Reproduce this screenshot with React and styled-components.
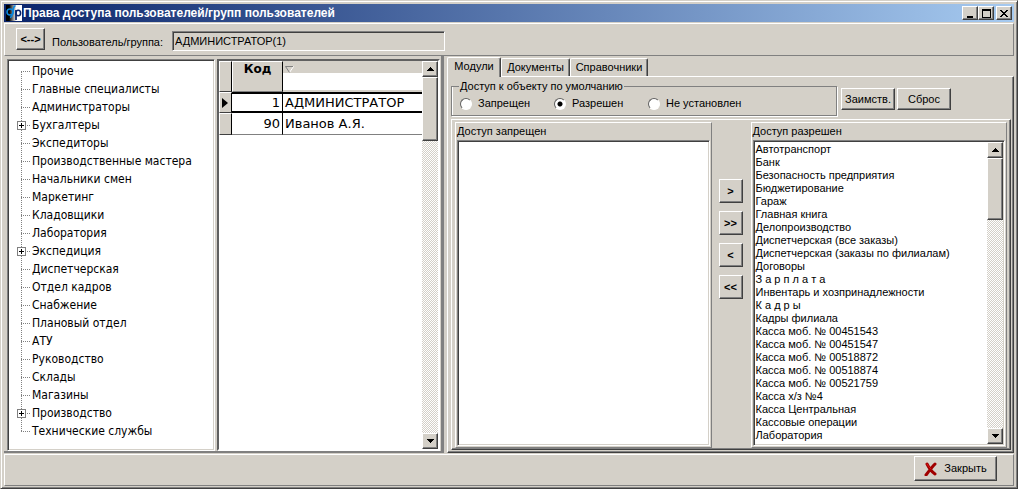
import { useState } from 'react';
import styled, { createGlobalStyle, css } from 'styled-components';

const GlobalStyle = createGlobalStyle`
  * { box-sizing: border-box; }
  body {
    margin: 0;
    background: #d4d0c8;
    color: #000;
    font-family: "Liberation Sans", Arial, sans-serif;
    font-size: 11px;
    line-height: 13px;
  }
  button, input {
    font: inherit;
    color: inherit;
    margin: 0;
  }
  ul {
    list-style: none;
    margin: 0;
    padding: 0;
  }
`

const raised = css`
  border: 1px solid;
  border-color: #fff #808080 #808080 #fff;
`
const raisedDeep = css`
  border: 1px solid;
  border-color: #fff #404040 #404040 #fff;
  box-shadow: inset -1px -1px 0 #808080;
`
const sunken = css`
  border: 1px solid;
  border-color: #808080 #fff #fff #808080;
  box-shadow: inset 1px 1px 0 #404040, inset -1px -1px 0 #d4d0c8;
`

const Window = styled.div`
  display: flex;
  flex-direction: column;
  min-height: 100vh;
  padding: 3px 3px 2px;
  border: 1px solid;
  border-color: #d4d0c8 #404040 #404040 #d4d0c8;
  box-shadow: inset 1px 1px 0 #fff, inset -1px -1px 0 #808080;
`
const TitleBar = styled.header`
  display: flex;
  align-items: center;
  height: 18px;
  padding: 0 2px;
  background: linear-gradient(to right, #0a246a, #a6caf0);
`
const Title = styled.h1`
  flex: 1;
  margin: 0 0 0 1px;
  color: #fff;
  font-size: 12px;
  line-height: 16px;
  font-weight: bold;
  white-space: nowrap;
`
const WindowButtons = styled.div`
  display: flex;
  button:last-child { margin-left: 2px; }
`
const Button = styled.button`
  display: flex;
  align-items: center;
  justify-content: center;
  gap: 6px;
  width: ${p => p.$width}px;
  height: ${p => p.$height}px;
  padding: 0;
  background: #d4d0c8;
  white-space: nowrap;
  font-weight: ${p => p.$bold ? 700 : 400};
  ${raisedDeep}
`
const TopPanel = styled.div`
  display: flex;
  align-items: flex-start;
  height: 33px;
  margin-top: 1px;
  padding: 4px 11px;
  ${raised}
`
const TopLabel = styled.label`
  margin: 8px 5px 0 7px;
  width: 115px;
  white-space: nowrap;
`
const TopInput = styled.input`
  width: 273px;
  height: 20px;
  margin-top: 3px;
  padding: 0 2px;
  border-radius: 0;
  background: #d4d0c8;
  outline: none;
  ${sunken}
`
const Main = styled.main`
  display: flex;
  flex: 1;
`
const LeftPane = styled.section`
  display: flex;
  width: 440px;
  padding: 3px 1px 0 3px;
  border-right: 3px solid #808080;
  border-bottom: 2px solid #808080;
`
const TreeBox = styled.nav`
  width: 208px;
  margin-right: 2px;
  padding: 0 9px;
  background: #fff;
  ${sunken}
`
const TreeItem = styled.li`
  display: flex;
  align-items: center;
  height: 18px;
  gap: 1px;
  font-family: "DejaVu Sans Condensed", "DejaVu Sans", sans-serif;
  font-size: 12px;
  white-space: nowrap;
  &:first-child { margin-top: 2px; }
`
const GridBox = styled.div`
  display: flex;
  flex: 1;
  border: 2px solid;
  border-color: #606060 #fff #fff #606060;
  background: #fff;
`
const GridArea = styled.div`
  flex: 1;
`
const Table = styled.table`
  width: 100%;
  table-layout: fixed;
  border-collapse: separate;
  border-spacing: 0;
  font-family: "DejaVu Sans", sans-serif;
  font-size: 13px;
  line-height: 16px;
`
const Indicator = styled.td`
  width: 13px;
  padding: 0 0 0 2px;
  background: #d4d0c8;
  border: 1px solid;
  border-color: #fff #000 #404040 #fff;
  svg { display: block; }
`
const CodeHead = styled.th`
  width: 51px;
  height: 31px;
  padding: 0;
  vertical-align: top;
  font-size: 12px;
  line-height: 14px;
  background: #d4d0c8;
  border: 1px solid;
  border-color: #fff #000 #808080 #fff;
`
const NameHead = styled.th`
  height: 12px;
  padding: 4px 0 0 2px;
  background: #d4d0c8;
  svg { display: block; }
`
const FilterCell = styled.td`
  height: 19px;
  padding: 0;
  border-bottom: 2px solid #d4d0c8;
`
const Cell = styled.td`
  height: ${p => p.$current ? 21 : 22}px;
  padding: 0 2px;
  white-space: nowrap;
  text-align: ${p => p.$right ? 'right' : 'left'};
  border-right: ${p => p.$right ? '1px solid #000' : '0'};
  border-top: ${p => p.$current ? '2px solid #000' : '0'};
  border-bottom: ${p => p.$current ? '2px solid #000' : '1px solid #808080'};
`
const Bar = styled.div`
  display: flex;
  flex-direction: column;
  justify-content: space-between;
  width: 16px;
  background: repeating-conic-gradient(#fff 0 25%, #d4d0c8 0 50%) 0 0 / 2px 2px;
`
const Thumb = styled.div`
  height: ${p => p.$height}px;
  background: #d4d0c8;
  ${raisedDeep}
`
const RightPane = styled.section`
  display: flex;
  flex-direction: column;
  flex: 1;
  min-width: 0;
  padding: 1px 0 0 3px;
`
const Tabs = styled.div`
  display: flex;
  align-items: flex-end;
  height: 19px;
`
const Tab = styled.button`
  height: ${p => p.$active ? 20 : 18}px;
  width: ${p => p.$width}px;
  padding: 0 0 ${p => p.$active ? 2 : 0}px;
  margin-bottom: ${p => p.$active ? -1 : 0}px;
  position: relative;
  background: #d4d0c8;
  border: 1px solid;
  border-color: #fff #404040 transparent #fff;
  border-bottom: 0;
  border-radius: 2px 2px 0 0;
  box-shadow: inset -1px 0 0 #808080;
  white-space: nowrap;
`
const Page = styled.div`
  display: flex;
  flex-direction: column;
  flex: 1;
  padding: 3px 2px 2px 3px;
  ${raisedDeep}
`
const AccessRow = styled.div`
  display: flex;
  align-items: flex-start;
  height: 39px;
  gap: 3px;
`
const Group = styled.fieldset`
  display: flex;
  width: 386px;
  height: 36px;
  margin: 0 1px 0 0;
  padding: 4px 8px;
  border: 1px solid #808080;
  box-shadow: 1px 1px 0 #fff, inset 1px 0 0 #fff;
  legend {
    margin-left: -1px;
    padding: 0 1px;
  }
`
const Radio = styled.label`
  display: flex;
  align-items: center;
  width: 94px;
  height: 13px;
  gap: 6px;
  white-space: nowrap;
  input {
    appearance: none;
    flex: none;
    width: 12px;
    height: 12px;
    border: 1px solid;
    border-color: #606060 #fff #fff #606060;
    border-radius: 50%;
    background: #fff;
  }
  input:checked {
    background: radial-gradient(circle, #000 2px, #fff 3px);
  }
`
const PageButtons = styled.div`
  display: flex;
  gap: 2px;
  padding-top: 8px;
`
const Lists = styled.div`
  display: flex;
  flex: 1;
  padding: 2px 3px 1px;
  ${raisedDeep}
`
const ListPanel = styled.div`
  display: flex;
  flex-direction: column;
  flex: 1;
  min-width: 0;
  padding: 0 1px 1px;
  ${raised}
`
const ListTitle = styled.div`
  padding: 2px 0 2px 0;
`
const ListBox = styled.div`
  display: flex;
  flex: 1;
  padding: 1px;
  background: #fff;
  ${sunken}
  ul {
    flex: 1;
    padding: 1px 0 0 1px;
    white-space: nowrap;
  }
`
const MoveButtons = styled.div`
  display: flex;
  flex-direction: column;
  align-items: flex-start;
  gap: 8px;
  width: 39px;
  padding: 57px 0 0 7px;
`
const Footer = styled.footer`
  display: flex;
  justify-content: flex-end;
  height: 32px;
  margin-top: 1px;
  padding: 1px 16px 0 0;
  ${raised}
`

const groups = [
    "Прочие", "Главные специалисты", "Администраторы", "Бухгалтеры", "Экспедиторы",
    "Производственные мастера", "Начальники смен", "Маркетинг", "Кладовщики", "Лаборатория",
    "Экспедиция", "Диспетчерская", "Отдел кадров", "Снабжение", "Плановый отдел", "АТУ",
    "Руководство", "Склады", "Магазины", "Производство", "Технические службы"
]
const expandable = ["Бухгалтеры", "Экспедиция", "Производство"]

const modules = [
    "Автотранспорт", "Банк", "Безопасность предприятия", "Бюджетирование", "Гараж",
    "Главная книга", "Делопроизводство", "Диспетчерская (все заказы)",
    "Диспетчерская (заказы по филиалам)", "Договоры", "З а р п л а т а",
    "Инвентарь и хозпринадлежности", "К а д р ы", "Кадры филиала",
    "Касса моб. № 00451543", "Касса моб. № 00451547", "Касса моб. № 00518872",
    "Касса моб. № 00518874", "Касса моб. № 00521759", "Касса х/з №4",
    "Касса Центральная", "Кассовые операции", "Лаборатория"
]

const AppIcon = () => (
    <svg width="16" height="16" viewBox="0 0 16 16">
        <defs>
            <linearGradient id="logo" x1="0" y1="0" x2="1" y2="0">
                <stop offset="0.2" stopColor="#000" />
                <stop offset="0.65" stopColor="#fff" />
            </linearGradient>
        </defs>
        <rect width="16" height="16" fill="url(#logo)" />
        <circle cx="4" cy="7" r="3" fill="none" stroke="#0a86dc" strokeWidth="1.6" />
        <path d="M9.5 0.8C7 1 7.5 4 7 7C6.6 10 6 12 4 12.5" fill="none" stroke="#0a86dc" strokeWidth="1.6" />
        <path d="M10 15V5" stroke="#0a246a" strokeWidth="1.8" />
        <ellipse cx="12.2" cy="8" rx="2.4" ry="2.8" fill="none" stroke="#0a246a" strokeWidth="1.6" />
    </svg>
)

const Branch = ({ first, last, plus }) => (
    <svg width="14" height="18" viewBox="0 0 14 18" shapeRendering="crispEdges">
        <path d={`M4.5 ${first ? 10 : 0}V${last ? 10 : 18}M4 9.5H14`} stroke="#808080" strokeDasharray="1 1" fill="none" />
        {plus && <>
            <rect x="0.5" y="5.5" width="8" height="8" fill="#fff" stroke="#808080" />
            <path d="M2 9.5H7M4.5 7V12" stroke="#000" />
        </>}
    </svg>
)

const Arrow = ({ down }) => (
    <svg width="7" height="4" viewBox="0 0 7 4" shapeRendering="crispEdges">
        <path d={down ? "M0 0H7L3.5 4Z" : "M0 4H7L3.5 0Z"} />
    </svg>
)

const ScrollBar = ({ thumb }) => (
    <Bar>
        <div>
            <Button $width={16} $height={16} aria-label="Вверх"><Arrow /></Button>
            <Thumb $height={thumb} />
        </div>
        <Button $width={16} $height={16} aria-label="Вниз"><Arrow down /></Button>
    </Bar>
)

const App = () => {

    const [tab, setTab] = useState("Модули")
    const [access, setAccess] = useState("Разрешен")

    const renderTab = (name, width) => {
        return (
            <Tab role="tab" aria-selected={tab === name} $active={tab === name} $width={width}
                onClick={() => setTab(name)}>{name}</Tab>
        )
    }

    const renderRadio = (name) => {
        return (
            <Radio>
                <input type="radio" name="access" checked={access === name} onChange={() => setAccess(name)} />
                {name}
            </Radio>
        )
    }

    return (
        <Window>
            <GlobalStyle />
            <TitleBar>
                <AppIcon />
                <Title>Права доступа пользователей/групп пользователей</Title>
                <WindowButtons>
                    <Button $width={16} $height={14} aria-label="Свернуть">
                        <svg width="10" height="9" viewBox="0 0 10 9"><path d="M2 7H8V9H2Z" /></svg>
                    </Button>
                    <Button $width={16} $height={14} aria-label="Развернуть">
                        <svg width="9" height="9" viewBox="0 0 9 9" shapeRendering="crispEdges">
                            <path d="M0 0H9V9H0ZM1 2V8H8V2Z" fillRule="evenodd" />
                        </svg>
                    </Button>
                    <Button $width={16} $height={14} aria-label="Закрыть окно">
                        <svg width="8" height="7" viewBox="0 0 8 7" shapeRendering="crispEdges">
                            <path d="M0 0H2V1H3V2H5V1H6V0H8V1H7V2H6V3H5V4H6V5H7V6H8V7H6V6H5V5H3V6H2V7H0V6H1V5H2V4H3V3H2V2H1V1H0Z" />
                        </svg>
                    </Button>
                </WindowButtons>
            </TitleBar>

            <TopPanel>
                <Button $width={29} $height={22} $bold>{"<-->"}</Button>
                <TopLabel htmlFor="user">Пользователь/группа:</TopLabel>
                <TopInput id="user" readOnly value="АДМИНИСТРАТОР(1)" />
            </TopPanel>

            <Main>
                <LeftPane>
                    <TreeBox>
                        <ul>
                            {groups.map((name, i) => (
                                <TreeItem key={name}>
                                    <Branch first={i === 0} last={i === groups.length - 1} plus={expandable.includes(name)} />
                                    {name}
                                </TreeItem>
                            ))}
                        </ul>
                    </TreeBox>
                    <GridBox>
                        <GridArea>
                            <Table>
                                <thead>
                                    <tr>
                                        <Indicator rowSpan={2} />
                                        <CodeHead rowSpan={2}>Код</CodeHead>
                                        <NameHead aria-label="Имя">
                                            <svg width="9" height="7" viewBox="0 0 9 7">
                                                <path d="M8.5 0.5L4.5 6.5" stroke="#fff" />
                                                <path d="M8 0.5H0.5L4.5 6.5" fill="none" stroke="#808080" />
                                            </svg>
                                        </NameHead>
                                    </tr>
                                    <tr><FilterCell /></tr>
                                </thead>
                                <tbody>
                                    <tr>
                                        <Indicator>
                                            <svg width="6" height="10" viewBox="0 0 6 10"><path d="M0 0L6 5L0 10Z" /></svg>
                                        </Indicator>
                                        <Cell $right $current>1</Cell>
                                        <Cell $current>АДМИНИСТРАТОР</Cell>
                                    </tr>
                                    <tr>
                                        <Indicator />
                                        <Cell $right>90</Cell>
                                        <Cell>Иванов А.Я.</Cell>
                                    </tr>
                                </tbody>
                            </Table>
                        </GridArea>
                        <ScrollBar thumb={64} />
                    </GridBox>
                </LeftPane>

                <RightPane>
                    <Tabs role="tablist">
                        {renderTab("Модули", 54)}
                        {renderTab("Документы", 69)}
                        {renderTab("Справочники", 78)}
                    </Tabs>
                    <Page>
                        <AccessRow>
                            <Group>
                                <legend>Доступ к объекту по умолчанию</legend>
                                {renderRadio("Запрещен")}
                                {renderRadio("Разрешен")}
                                {renderRadio("Не установлен")}
                            </Group>
                            <PageButtons>
                                <Button $width={54} $height={22}>Заимств.</Button>
                                <Button $width={54} $height={22}>Сброс</Button>
                            </PageButtons>
                        </AccessRow>
                        <Lists>
                            <ListPanel>
                                <ListTitle>Доступ запрещен</ListTitle>
                                <ListBox />
                            </ListPanel>
                            <MoveButtons>
                                <Button $width={24} $height={24} $bold>{">"}</Button>
                                <Button $width={24} $height={24} $bold>{">>"}</Button>
                                <Button $width={24} $height={24} $bold>{"<"}</Button>
                                <Button $width={24} $height={24} $bold>{"<<"}</Button>
                            </MoveButtons>
                            <ListPanel>
                                <ListTitle>Доступ разрешен</ListTitle>
                                <ListBox>
                                    <ul>
                                        {modules.map((name) => <li key={name}>{name}</li>)}
                                    </ul>
                                    <ScrollBar thumb={62} />
                                </ListBox>
                            </ListPanel>
                        </Lists>
                    </Page>
                </RightPane>
            </Main>

            <Footer>
                <Button $width={83} $height={25}>
                    <svg width="14" height="14" viewBox="0 0 14 14">
                        <path d="M3 2C5 6 8 10 11 12M11 2C8 5 5 9 2 13" fill="none" stroke="#a00000" strokeWidth="3" strokeLinecap="round" />
                        <path d="M3 2C4 4 6 6 7 7" fill="none" stroke="#e01818" strokeLinecap="round" />
                    </svg>
                    Закрыть
                </Button>
            </Footer>
        </Window>
    )
}

export default App;
